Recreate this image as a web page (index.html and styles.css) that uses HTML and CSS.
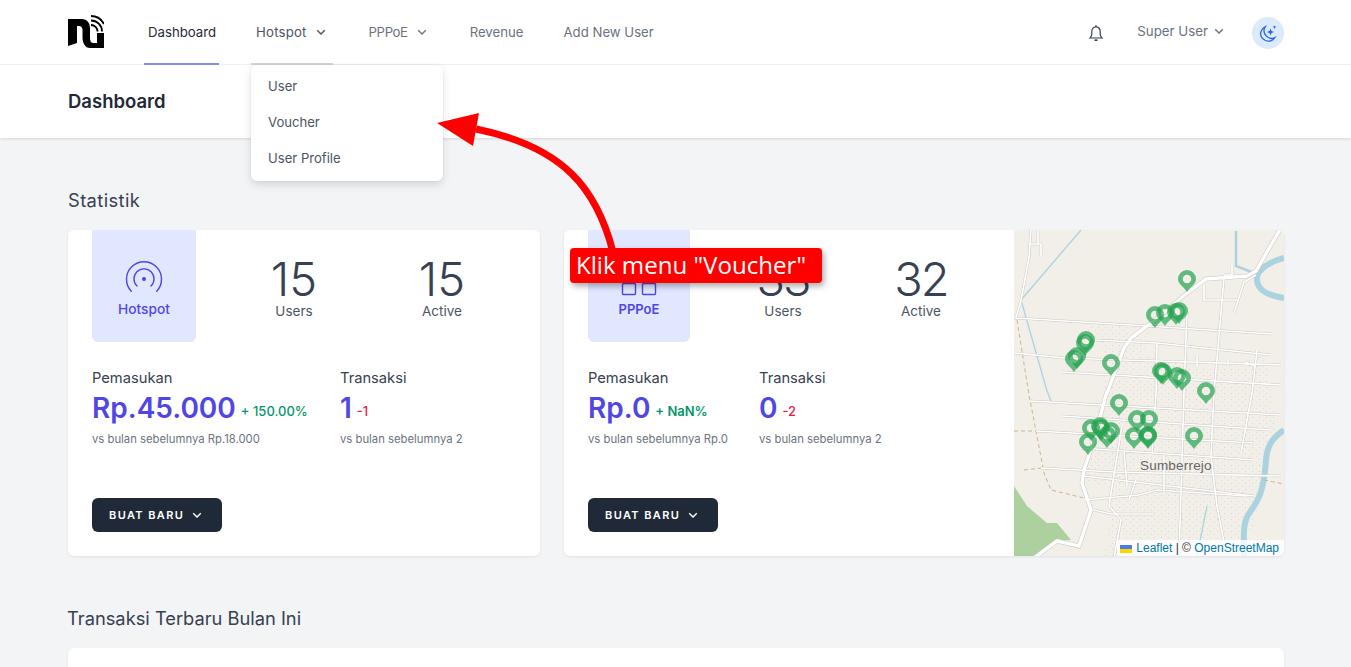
FILE: index.html
```html
<!DOCTYPE html>
<html lang="id">
<head>
<meta charset="utf-8">
<title>Dashboard</title>
<link rel="stylesheet" href="styles.css">
</head>
<body>
<nav class="topnav">
  <div class="topnav-inner">
    <a class="logo" href="#" aria-label="Logo">
      <svg width="36" height="33" viewBox="0 0 36 33">
        <path fill="#000" d="M0 4H14C19 4 22 8 22 13V23C22 26 23 28 25.500 28H29V18H36V33H22C17 33 14.500 28 14.500 22V15C14.500 12.500 13 11 11 11H9V28L0 31Z"/>
        <g fill="none" stroke="#000" stroke-width="1.800">
          <path d="M23 10A6.500 6.500 0 0 1 29.500 16.500"/>
          <path d="M23 5.500A11 11 0 0 1 34 16.500"/>
          <path d="M23 1A15 15 0 0 1 36 9"/>
        </g>
      </svg>
    </a>
    <ul class="nav-links">
      <li class="nav-item active"><a href="#">Dashboard</a></li>
      <li class="nav-item open nav-hotspot"><a href="#">Hotspot <svg class="chev" viewBox="0 0 12 12"><path d="M1.500 4L6 8.500L10.500 4"/></svg></a>
        <div class="dropdown">
          <a href="#">User</a>
          <a href="#">Voucher</a>
          <a href="#">User Profile</a>
        </div>
      </li>
      <li class="nav-item nav-pppoe"><a href="#">PPPoE <svg class="chev" viewBox="0 0 12 12"><path d="M1.500 4L6 8.500L10.500 4"/></svg></a></li>
      <li class="nav-item"><a href="#">Revenue</a></li>
      <li class="nav-item"><a href="#">Add New User</a></li>
    </ul>
    <div class="nav-right">
      <svg class="bell" width="18" height="18" viewBox="0 0 18 18"><path d="M3 14c1-1 1.800-2 1.800-4V7.500C4.800 4.800 6.500 3 9 3s4.200 1.800 4.200 4.500V10c0 2 .8 3 1.800 4Z M2.500 14H15.500"/><path d="M8.300 2.800C8.300 1.500 9.700 1.500 9.700 2.800"/><path class="bell-foot" d="M7.500 16.200H10.500"/></svg>
      <a class="user" href="#">Super User <svg class="chev" viewBox="0 0 12 12"><path d="M1.500 4L6 8.500L10.500 4"/></svg></a>
      <button class="theme" aria-label="Tema">
        <svg width="20" height="20" viewBox="0 0 20 20"><path class="moon" d="M7.500 3.500A7.500 7.500 0 0 0 17 14.500A7.500 7.500 0 0 1 7.500 17.500C3 16 1.500 11 3.500 7.500C4.500 5.500 6 4.200 7.500 3.500Z"/><path class="spark" d="M12.500 5.500L13.500 8L16 9L13.500 10L12.500 12.500L11.500 10L9 9L11.500 8Z"/><path class="spark" d="M16.500 2L17 3.500L18.500 4L17 4.500L16.500 6L16 4.500L14.500 4L16 3.500Z"/></svg>
      </button>
    </div>
  </div>
</nav>

<header class="page-header">
  <h1>Dashboard</h1>
</header>

<main class="content">
  <h2 class="section-title section-first">Statistik</h2>
  <div class="cards">
    <section class="card card-hotspot">
      <div class="card-body">
        <div class="top-row">
          <div class="tile">
            <svg width="40" height="40" viewBox="0 0 40 40"><g fill="none" stroke="#4f46e5" stroke-width="1.400" stroke-linecap="round"><path d="M7.300 32.300A17.500 17.500 0 1 1 32.700 32.300"/><path d="M13 27A10 10 0 1 1 27 27"/></g><circle cx="20" cy="20" r="2" fill="#4f46e5"/></svg>
            <span>Hotspot</span>
          </div>
          <div class="stats">
            <div class="stat"><b>15</b><span>Users</span></div>
            <div class="stat"><b>15</b><span>Active</span></div>
          </div>
        </div>
        <div class="figures">
          <div class="figure fig-a">
            <p class="fig-label">Pemasukan</p>
            <p class="fig-value">Rp.45.000 <small class="up">+ 150.00%</small></p>
            <p class="fig-sub">vs bulan sebelumnya Rp.18.000</p>
          </div>
          <div class="figure">
            <p class="fig-label">Transaksi</p>
            <p class="fig-value">1 <small class="down">-1</small></p>
            <p class="fig-sub">vs bulan sebelumnya 2</p>
          </div>
        </div>
        <button class="btn">BUAT BARU <svg class="chev" viewBox="0 0 12 12"><path d="M1.500 4L6 8.500L10.500 4"/></svg></button>
      </div>
    </section>

    <section class="card card-pppoe">
      <div class="card-body">
        <div class="top-row">
          <div class="tile">
            <svg width="40" height="40" viewBox="0 0 40 40"><g fill="none" stroke="#4f46e5" stroke-width="1.400"><rect x="3.500" y="24.500" width="13" height="11" rx="1"/><rect x="23.500" y="24.500" width="13" height="11" rx="1"/><rect x="13.500" y="6" width="13" height="11" rx="1"/></g></svg>
            <span>PPPoE</span>
          </div>
          <div class="stats">
            <div class="stat"><b>33</b><span>Users</span></div>
            <div class="stat"><b>32</b><span>Active</span></div>
          </div>
        </div>
        <div class="figures">
          <div class="figure fig-b">
            <p class="fig-label">Pemasukan</p>
            <p class="fig-value">Rp.0 <small class="up strong">+ NaN%</small></p>
            <p class="fig-sub">vs bulan sebelumnya Rp.0</p>
          </div>
          <div class="figure">
            <p class="fig-label">Transaksi</p>
            <p class="fig-value">0 <small class="down">-2</small></p>
            <p class="fig-sub">vs bulan sebelumnya 2</p>
          </div>
        </div>
        <button class="btn">BUAT BARU <svg class="chev" viewBox="0 0 12 12"><path d="M1.500 4L6 8.500L10.500 4"/></svg></button>
      </div>
      <div class="map">
        <svg width="270" height="326" viewBox="0 0 270 326">
          <defs>
            <pattern id="speck" width="7" height="6" patternUnits="userSpaceOnUse">
              <rect x="0" y="1" width="1" height="1" fill="#ddd3ca"/>
              <rect x="4" y="4" width="1" height="1" fill="#e4dcd4"/>
            </pattern>
            <symbol id="pin" viewBox="0 0 18 22" width="18" height="22">
              <path fill-rule="evenodd" d="M9 0A9 9 0 0 1 18 9C18 14 12 17 9 22C6 17 0 14 0 9A9 9 0 0 1 9 0ZM9 4.700A4.300 4.300 0 1 0 9 13.300A4.300 4.300 0 0 0 9 4.700Z"/>
            </symbol>
            <g id="roads">
              <path class="major" d="M93 163L110 118L117 108L140 91L173 63L192 49L233 46L242 41L257 15L267 -2"/>
              <path class="major" d="M93 161L80 210L70 240L68 253L77 280L65 316L43 311L20 328"/>
              <path d="M17 -2L15 28L7 70L2 88L133 96L258 104"/>
              <path d="M24 -2V14H27V26M15 14H24"/>
              <path d="M0 123L50 128L110 130L267 135"/>
              <path d="M48 142L267 155"/>
              <path d="M17 171L267 185"/>
              <path d="M48 186L257 200"/>
              <path d="M22 201L240 213"/>
              <path d="M67 218L240 230"/>
              <path d="M27 238L100 242L267 246"/>
              <path d="M70 246L240 266"/>
              <path d="M70 270L125 265L143 260L233 266"/>
              <path d="M80 110L143 113L257 125"/>
              <path d="M210 48L200 163L197 226L203 276L213 328"/>
              <path d="M173 82L170 163L165 328"/>
              <path d="M143 113L142 163L138 223"/>
              <path d="M243 120L238 163L227 223"/>
              <path d="M108 196L97 263L95 276L107 290L100 328"/>
              <path d="M220 83L230 52L242 45"/>
              <path d="M190 55V70L223 70"/>
              <path d="M218 36V45H210"/>
              <path d="M183 125V136M214 130V136M232 132L240 136"/>
              <path d="M80 280L97 284L140 284M110 222L113 255M122 250L115 270M150 225V262"/>
            </g>
          </defs>
          <rect class="land" width="270" height="326"/>
          <path class="speckle" d="M70 95L135 98L130 125L200 140L250 125L262 190L240 300L200 326L90 326L100 260L70 250L95 130Z"/>
          <path class="forest" d="M0 256L13 276L33 293L43 293L57 310L43 311L20 326L0 326Z"/>
          <g class="water">
            <path d="M67 0L7 70L33 161L37 171"/>
            <path class="canal" d="M222 1V36L240 43"/>
            <path class="river" d="M270 28C255 32 243 40 243 48C242 62 258 66 270 68"/>
            <path class="river" d="M270 200C258 208 253 216 252 230C250 260 245 270 236 282C228 293 230 305 230 326"/>
            <path d="M193 276L183 326"/>
          </g>
          <g class="admin">
            <path d="M3 90L15 165L22 201L30 243L37 260L70 268"/>
            <path d="M0 201H22M10 240L28 238"/>
            <path d="M250 250L270 254"/>
          </g>
          <use href="#roads" class="casing"/>
          <use href="#roads" class="road"/>
          <text class="place" x="126" y="240">Sumberrejo</text>
          <g class="pins">
            <use href="#pin" x="164" y="40"/><use href="#pin" x="132" y="76"/><use href="#pin" x="142" y="74"/>
            <use href="#pin" x="153" y="73"/><use href="#pin" x="156" y="72"/><use href="#pin" x="63" y="101"/>
            <use href="#pin" x="62" y="104"/><use href="#pin" x="54" y="117"/><use href="#pin" x="51" y="120"/>
            <use href="#pin" x="88" y="124"/><use href="#pin" x="138" y="132"/><use href="#pin" x="140" y="133"/>
            <use href="#pin" x="154" y="137"/><use href="#pin" x="159" y="139"/><use href="#pin" x="183" y="152"/>
            <use href="#pin" x="96" y="164"/><use href="#pin" x="114" y="180"/><use href="#pin" x="126" y="180"/>
            <use href="#pin" x="171" y="197"/><use href="#pin" x="111" y="197"/><use href="#pin" x="125" y="196"/>
            <use href="#pin" x="125" y="197"/><use href="#pin" x="68" y="189"/><use href="#pin" x="77" y="187"/>
            <use href="#pin" x="78" y="189"/><use href="#pin" x="88" y="192"/><use href="#pin" x="84" y="196"/>
            <use href="#pin" x="65" y="203"/>
          </g>
        </svg>
        <div class="attribution">
          <svg class="flag" width="12" height="8" viewBox="0 0 12 8"><rect width="12" height="4" fill="#4c7be1"/><rect y="4" width="12" height="4" fill="#ffd500"/></svg>
          <a href="#">Leaflet</a> | © <a href="#">OpenStreetMap</a>
        </div>
      </div>
    </section>
  </div>

  <h2 class="section-title section-second">Transaksi Terbaru Bulan Ini</h2>
  <section class="card card-table"></section>
</main>

<svg class="arrow" width="1351" height="667" viewBox="0 0 1351 667">
  <path class="arrow-line" d="M613 252C597 190 565 147 476 129"/>
  <path class="arrow-head" d="M437 123L479 113L473 146Z"/>
</svg>
<div class="callout">Klik menu "Voucher"</div>
</body>
</html>
```
FILE: styles.css
```css
* { box-sizing: border-box; }
html, body { margin: 0; height: 667px; overflow: hidden; }
body { background: #f3f4f6; font-family: Inter, "Noto Sans", sans-serif; color: #374151; position: relative; }
a { color: inherit; text-decoration: none; }
p, h1, h2, ul { margin: 0; padding: 0; }

.topnav { background: #fff; height: 65px; border-bottom: 1px solid #f3f4f6; }
.topnav-inner { display: flex; align-items: center; height: 65px; padding: 0 67px 0 68px; }
.logo { display: block; width: 36px; height: 33px; margin-right: 40px; margin-top: -2px; }
.nav-links { display: flex; gap: 32px; list-style: none; height: 65px; }
.nav-item { position: relative; }
.nav-item > a { display: flex; align-items: center; gap: 9px; height: 65px; padding: 1px 4px 0; font-size: 13.200px; color: #6b7280; border-bottom: 2px solid transparent; }
.nav-item.active > a { color: #1f2937; border-bottom-color: #818cf8; padding-right: 3px; }
.nav-item.open > a { color: #4b5563; border-bottom-color: #d1d5db; }
.nav-hotspot > a { padding-left: 5px; padding-right: 7px; letter-spacing: .2px; }
.nav-pppoe > a { padding-right: 7px; letter-spacing: -.4px; }
.chev { width: 10px; height: 10px; fill: none; stroke: currentColor; stroke-width: 1.700; }
.dropdown { position: absolute; left: 0; top: 65px; width: 192px; padding: 3px 0 5px; background: #fff; border-radius: 6px; box-shadow: 0 4px 8px rgba(0,0,0,.12), 0 0 2px rgba(0,0,0,.08); z-index: 5; }
.dropdown a { display: block; height: 36px; line-height: 36px; padding: 0 17px; font-size: 13.100px; color: #4b5563; }
.nav-right { margin-left: auto; display: flex; align-items: center; }
.bell { fill: none; stroke: #374151; stroke-width: 1.200; margin-right: 32px; }
.bell-foot { stroke-width: 1.600; }
.user { display: flex; align-items: center; gap: 6px; font-size: 13.300px; color: #6b7280; margin-right: 28px; margin-bottom: 3px; }
.theme { width: 32px; height: 32px; border: 0; padding: 0; border-radius: 50%; background: #dbeafe; display: flex; align-items: center; justify-content: center; }
.moon { fill: none; stroke: #2563eb; stroke-width: 1.300; }
.spark { fill: #2563eb; }

.page-header { height: 73px; background: #fff; display: flex; align-items: center; padding: 0 0 2px 68px; box-shadow: 0 1px 3px rgba(0,0,0,.12); }
.page-header h1 { font-size: 18.500px; font-weight: 600; color: #1f2937; }

.content { padding: 0 67px 0 68px; }
.section-title { font-size: 18.300px; font-weight: 400; color: #374151; line-height: 24px; padding-top: 50px; margin-bottom: 18px; }
.section-first { letter-spacing: .4px; }
.section-second { margin-left: -1px; }
.cards { display: grid; grid-template-columns: 472px 720px; gap: 24px; }
.card { background: #fff; border-radius: 6px; box-shadow: 0 1px 3px rgba(0,0,0,.08); overflow: hidden; }
.card-hotspot, .card-pppoe { height: 326px; display: flex; }
.card-body { flex: 1; padding: 0 24px; }
.card-table { height: 19px; border-radius: 6px 6px 0 0; }

.top-row { display: flex; }
.tile { height: 112px; background: #e0e7ff; border-radius: 0 0 6px 6px; display: flex; flex-direction: column; align-items: center; padding-top: 29px; font-size: 13px; font-weight: 600; color: #4f46e5; }
.tile span { margin-top: 1px; line-height: 18px; }
.card-hotspot .tile { width: 104px; font-size: 13.700px; font-weight: 500; }
.card-pppoe .tile { width: 102px; }
.stats { display: grid; }
.card-hotspot .stats { grid-template-columns: 148px 148px; margin-left: 24px; }
.card-pppoe .stats { grid-template-columns: 138px 138px; margin-left: 24px; }
.card-pppoe .stat b { letter-spacing: -2px; }
.stat { text-align: center; padding-top: 25px; }
.stat b { display: block; font-size: 47px; line-height: 47px; font-weight: 300; color: #374151; }
.stat span { display: block; font-size: 13.500px; line-height: 18px; color: #4b5563; }

.figures { display: flex; margin-top: 26px; height: 130px; }
.fig-a { width: 248px; }
.fig-b { width: 171px; }
.fig-label { font-size: 14.700px; line-height: 20px; color: #374151; }
.fig-value { display: flex; align-items: center; gap: 5px; height: 40px; font-size: 28px; line-height: 40px; font-weight: 600; color: #4f46e5; white-space: nowrap; }
.fig-value small { font-size: 13px; line-height: 20px; font-weight: 500; margin-top: 6px; }
.up { color: #059669; }
.up.strong { font-weight: 600; }
.down { color: #e11d48; }
.fig-sub { font-size: 11.300px; line-height: 16px; color: #6b7280; margin-top: 3px; white-space: nowrap; }

.btn { display: flex; align-items: center; gap: 8px; width: 130px; height: 34px; padding: 0 17px; border: 0; border-radius: 6px; background: #1f2937; color: #fff; font-family: inherit; font-size: 11px; font-weight: 600; letter-spacing: 1.400px; white-space: nowrap; }

.map { position: relative; width: 270px; height: 326px; flex: none; background: #f2efe9; }
.map > svg { display: block; }
.land { fill: #f2efe9; }
.speckle { fill: url(#speck); }
.forest { fill: #add19e; }
.water path { fill: none; stroke: #aad3df; stroke-width: 1.300; }
.water .canal { stroke-width: 2.500; }
.water .river { stroke-width: 6; }
.admin path { fill: none; stroke: #cfb48a; stroke-width: 1; stroke-dasharray: 4 3; }
.casing { fill: none; stroke: #c9c6c1; stroke-width: 2.600; --major: 4.500px; }
.road { fill: none; stroke: #fff; stroke-width: 1.700; --major: 3.500px; }
.major { stroke-width: var(--major); }
.place { font-family: "Liberation Sans", Arial, sans-serif; font-size: 13.500px; fill: #666; letter-spacing: .2px; }
.pins { fill: #22a34e; fill-opacity: .7; }
.attribution { position: absolute; right: 0; bottom: 0; height: 16px; padding: 0 5px 0 3px; background: rgba(255,255,255,.8); font-family: "Liberation Sans", Arial, sans-serif; font-size: 12px; line-height: 16px; color: #333; white-space: nowrap; }
.attribution a { color: #0078a8; }
.flag { margin-right: 1px; vertical-align: -0.500px; }

.arrow { position: absolute; left: 0; top: 0; pointer-events: none; z-index: 10; }
.arrow-line { fill: none; stroke: #f00; stroke-width: 7; }
.arrow-head { fill: #f00; }
.callout { position: absolute; left: 570px; top: 248px; width: 252px; height: 35px; padding-left: 6px; border-radius: 4px; background: #f00; color: #fff; font-family: "Open Sans", sans-serif; font-size: 24.100px; line-height: 34px; box-shadow: 2px 3px 6px rgba(0,0,0,.35); white-space: nowrap; z-index: 11; }
```
